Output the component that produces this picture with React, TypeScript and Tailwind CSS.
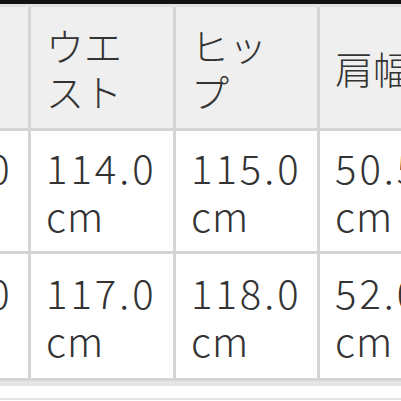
import React from "react";

const header = ["バスト", "ウエスト", "ヒップ", "肩幅"];
const rows = [
  ["111.0", "114.0", "115.0", "50.5"],
  ["114.0", "117.0", "118.0", "52.0"],
];
const widths = ["w-[141px]", "w-[142px]", "w-[141px]", "w-[141px]"];

export default function App() {
  return (
    <div
      className="w-[401px] h-[401px] overflow-hidden bg-white flex flex-col"
      style={{ fontFamily: '"Noto Sans CJK JP", "Noto Sans", sans-serif' }}
    >
      <div className="h-[4px] bg-[#111111] shrink-0" />
      <div className="-ml-[113px] shrink-0 border-t-[3px] border-b-[3px] border-t-[#e2e2e2] border-b-[#d4d4d4]">
        <div className="grid grid-cols-[141px_142px_141px_141px] grid-rows-[121px_120px_124px] gap-[3px] bg-[#d4d4d4] w-max">
          {header.map((h, i) => (
            <div
              key={"h" + i}
              className={`${widths[i]} bg-[#efefef] flex items-center px-[15px] text-[38px] leading-[46px] font-light text-[#333333]`}
            >
              <span>{h}</span>
            </div>
          ))}
          {rows.map((r, ri) =>
            r.map((c, ci) => (
              <div
                key={ri + "-" + ci}
                className={`${widths[ci]} bg-white flex flex-col justify-center px-[15px] text-[40px] leading-[48px] font-light text-[#333333] whitespace-nowrap`}
              >
                <span className="tracking-[3px]">{c}</span>
                <span className="tracking-[1px]">cm</span>
              </div>
            ))
          )}
        </div>
      </div>
      <div className="h-[5px] bg-[#e4e4e4] shrink-0" />
      <div className="h-[12px] bg-white shrink-0" />
      <div className="h-[2px] bg-[#e6e6e6] shrink-0" />
    </div>
  );
}
